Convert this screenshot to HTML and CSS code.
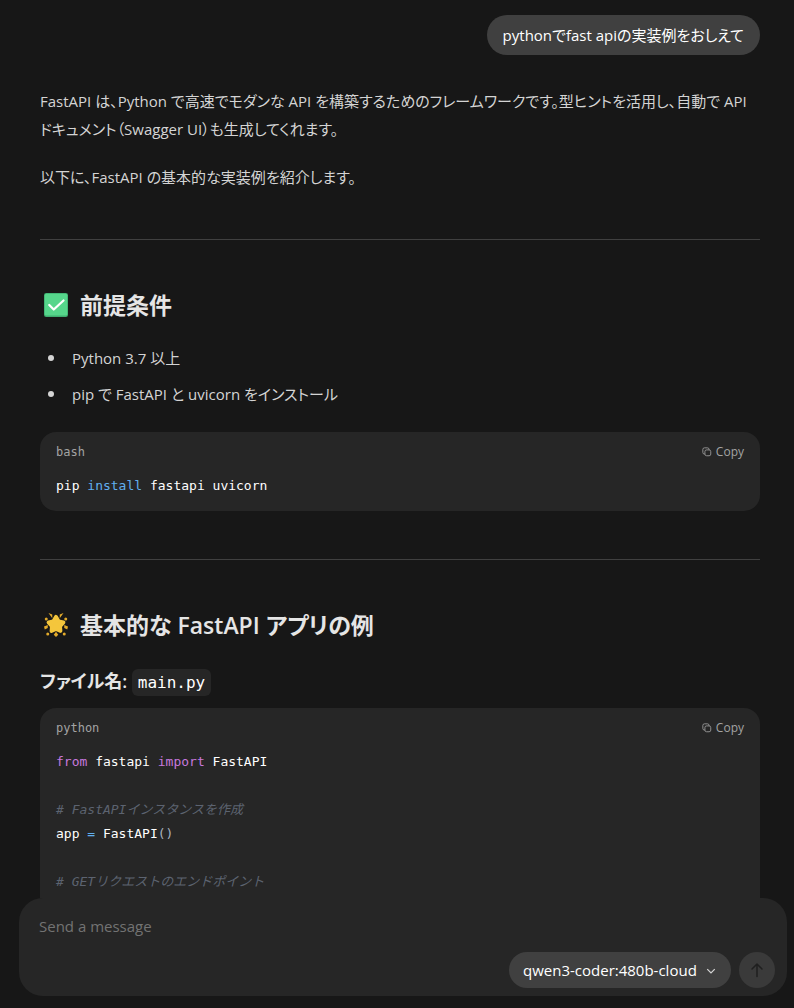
FILE: index.html
```
<!DOCTYPE html>
<html lang="ja">
<head>
    <meta charset="UTF-8">
    <meta name="viewport" content="width=device-width, initial-scale=1.0">
    <title>Chat</title>
    <link rel="stylesheet" href="styles.css">
</head>
<body>
    <main class="chat">
        <div class="user-message">pythonでfast apiの実装例をおしえて</div>

        <article class="answer">
            <p>FastAPI は、Python で高速でモダンな API を構築するためのフレームワークです。型ヒントを活用し、自動で API ドキュメント（Swagger UI）も生成してくれます。</p>
            <p>以下に、FastAPI の基本的な実装例を紹介します。</p>

            <hr>

            <h2>
                <svg class="emoji" viewBox="0 0 32 32" aria-hidden="true">
                    <rect x="0" y="0" width="32" height="32" rx="3" fill="#3fae70"/>
                    <rect x="1" y="1" width="30" height="29" rx="2" fill="#56d68b"/>
                    <path d="M7 16l6 6L26 10" fill="none" stroke="#fff" stroke-width="3" stroke-linecap="round" stroke-linejoin="round"/>
                </svg>
                前提条件
            </h2>
            <ul>
                <li>Python 3.7 以上</li>
                <li>pip で FastAPI と uvicorn をインストール</li>
            </ul>

            <section class="code-block">
                <header class="code-header">
                    <span class="code-lang">bash</span>
                    <button class="copy-button" type="button">
                        <svg viewBox="0 0 12 12" aria-hidden="true">
                            <rect x="3.5" y="3.5" width="7" height="7" rx="2"/>
                            <path d="M3.5 8.5H3a2 2 0 0 1-2-2V3a2 2 0 0 1 2-2h3.5a2 2 0 0 1 2 2v.5"/>
                        </svg>
                        Copy
                    </button>
                </header>
                <pre><code>pip <span class="builtin">install</span> fastapi uvicorn</code></pre>
            </section>

            <hr>

            <h2>
                <svg class="emoji" viewBox="0 0 32 32" aria-hidden="true">
                    <g fill="#e3ab2b">
                        <path d="M6 0l5 2 0 5zM26 0l-5 2 0 5z"/>
                        <path d="M16 25l-3 4 3 3 3-3z"/>
                        <path d="M0 18l5-2 0 4-4 2zM32 18l-5-2 0 4 4 2z"/>
                        <circle cx="3" cy="8" r="2"/>
                        <circle cx="29" cy="8" r="2"/>
                        <circle cx="5" cy="28" r="2"/>
                        <circle cx="27" cy="28" r="2"/>
                    </g>
                    <path d="M16 5l3.500 6 6.500 1.500-4.500 5L22 24l-6-2.500L10 24l.5-6.500-4.500-5L12.500 11z" fill="#f4c63c" stroke="#f4c63c" stroke-width="5" stroke-linejoin="round"/>
                </svg>
                基本的な FastAPI アプリの例
            </h2>
            <h3>ファイル名: <code class="inline-code">main.py</code></h3>

            <section class="code-block">
                <header class="code-header">
                    <span class="code-lang">python</span>
                    <button class="copy-button" type="button">
                        <svg viewBox="0 0 12 12" aria-hidden="true">
                            <rect x="3.5" y="3.5" width="7" height="7" rx="2"/>
                            <path d="M3.5 8.5H3a2 2 0 0 1-2-2V3a2 2 0 0 1 2-2h3.5a2 2 0 0 1 2 2v.5"/>
                        </svg>
                        Copy
                    </button>
                </header>
                <pre><code><span class="keyword">from</span> fastapi <span class="keyword">import</span> FastAPI

<span class="comment"># FastAPIインスタンスを作成</span>
app <span class="builtin">=</span> FastAPI<span class="punct">()</span>

<span class="comment"># GETリクエストのエンドポイント</span>


</code></pre>
            </section>
        </article>
    </main>

    <footer class="footer">
        <form class="composer">
            <textarea class="message-input" rows="1" placeholder="Send a message" aria-label="Message"></textarea>
            <div class="composer-actions">
                <div class="model-picker">
                    <select aria-label="Model">
                        <option>qwen3-coder:480b-cloud</option>
                    </select>
                    <svg class="chevron" viewBox="0 0 8 8" aria-hidden="true">
                        <path d="M1 2.500l3 3 3-3"/>
                    </svg>
                </div>
                <button class="send-button" type="button" aria-label="Send">
                    <svg viewBox="0 0 16 16" aria-hidden="true">
                        <path d="M8 14.500V2M3 7l5-5 5 5"/>
                    </svg>
                </button>
            </div>
        </form>
    </footer>
</body>
</html>
```
FILE: styles.css
```
* {
    box-sizing: border-box;
}

body {
    display: flex;
    flex-direction: column;
    height: 100vh;
    margin: 0;
    background-color: #171717;
    color: #d4d4d4;
    font-family: "Open Sans", "Noto Sans CJK JP", sans-serif;
    font-size: 15px;
    line-height: 28px;
    font-feature-settings: "palt";
}

button, select, textarea {
    font: inherit;
    border: none;
    outline: none;
}

.chat {
    display: flex;
    flex-direction: column;
    flex: 1;
    min-height: 0;
    padding: 15px 34px 0 40px;
    overflow-y: auto;
    scrollbar-width: none;
}

.user-message {
    align-self: flex-end;
    padding: 8px 16px;
    border-radius: 20px;
    background-color: #404040;
    color: #fff;
    line-height: 24px;
}

.answer {
    margin-top: 32px;
}

.answer p {
    margin: 0 0 20px;
}

hr {
    height: 1px;
    margin: 48px 0;
    border: none;
    background-color: #404040;
}

h2 {
    display: flex;
    align-items: center;
    gap: 12px;
    margin: 0 0 22px;
    padding-left: 4px;
    color: #e5e5e5;
    font-size: 23px;
    font-weight: 600;
    line-height: 34px;
}

.emoji {
    width: 24px;
    height: 24px;
}

h3 {
    margin: 0 0 8px;
    color: #e5e5e5;
    font-size: 18px;
    font-weight: 600;
    line-height: 34px;
}

ul {
    margin: 0 0 24px;
    padding: 0 0 0 8px;
    list-style: none;
}

li {
    display: flex;
    align-items: center;
    gap: 18px;
}

li::before {
    content: "";
    width: 6px;
    height: 6px;
    border-radius: 50%;
    background-color: #d4d4d4;
}

li + li {
    margin-top: 8px;
}

pre, code, .code-lang {
    font-family: "DejaVu Sans Mono", "Noto Sans CJK JP", monospace;
}

.inline-code {
    padding: 4px 6px;
    border-radius: 6px;
    background-color: #262626;
    color: #fff;
    font-size: 16px;
    font-weight: 400;
}

.code-block {
    padding: 8px 16px 13px;
    border-radius: 16px;
    background-color: #262626;
}

.code-header {
    display: flex;
    align-items: center;
    justify-content: space-between;
    height: 24px;
    margin-bottom: 10px;
    color: #a3a3a3;
    font-size: 12px;
}

.copy-button {
    display: flex;
    align-items: center;
    gap: 4px;
    padding: 0;
    background: none;
    color: #a3a3a3;
    cursor: pointer;
}

.copy-button svg {
    width: 10px;
    height: 10px;
    fill: none;
    stroke: currentColor;
}

pre {
    margin: 0;
    color: #fff;
    font-size: 13px;
    line-height: 24px;
    font-feature-settings: normal;
}

.keyword {
    color: #c678dd;
}

.builtin {
    color: #61afef;
}

.punct {
    color: #abb2bf;
}

.comment {
    color: #5c6370;
    font-style: italic;
}

.footer {
    padding: 0 7px 12px 19px;
}

.composer {
    display: flex;
    flex-direction: column;
    gap: 12px;
    padding: 14px 12px 8px 20px;
    border-radius: 24px;
    background-color: #262626;
}

.message-input {
    height: 28px;
    padding: 0;
    background: none;
    color: #fff;
    resize: none;
}

.message-input::placeholder {
    color: #737373;
}

.composer-actions {
    display: flex;
    justify-content: flex-end;
    gap: 8px;
}

.model-picker {
    position: relative;
}

.model-picker select {
    height: 36px;
    padding: 0 34px 0 14px;
    border-radius: 18px;
    appearance: none;
    background-color: #404040;
    color: #fff;
    cursor: pointer;
}

.chevron {
    position: absolute;
    top: 14px;
    right: 15px;
    width: 10px;
    height: 10px;
    fill: none;
    stroke: #d4d4d4;
    pointer-events: none;
}

.send-button {
    display: flex;
    align-items: center;
    justify-content: center;
    width: 36px;
    height: 36px;
    padding: 0;
    border-radius: 50%;
    background-color: #3a3a3a;
}

.send-button svg {
    width: 16px;
    height: 16px;
    fill: none;
    stroke: #1f1f1f;
    stroke-width: 1.5;
    stroke-linecap: round;
    stroke-linejoin: round;
}
```
